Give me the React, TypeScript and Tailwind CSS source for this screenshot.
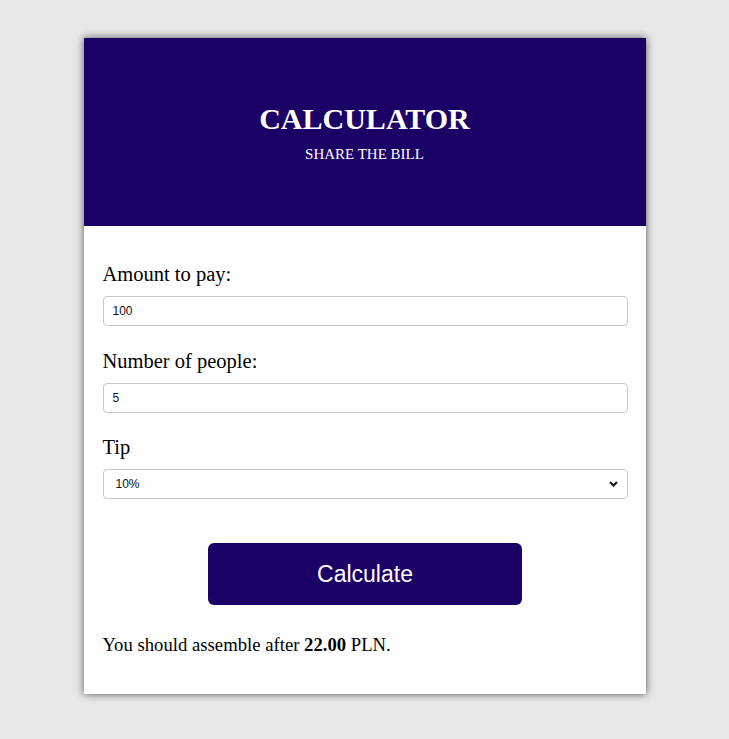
import { useState } from "react"

export default function App() {
  const [amount, setAmount] = useState<string>("100")
  const [people, setPeople] = useState<string>("5")
  const [tip, setTip] = useState<string>("0.1")
  const [result, setResult] = useState<string>("22.00")

  const calculate = () => {
    const a = Number(amount)
    const p = Number(people)
    const t = Number(tip)
    if (!p) return
    setResult(((a + a * t) / p).toFixed(2))
  }

  return (
    <div className="min-h-[739px] bg-[#e8e8e8] pt-[38px] pb-10">
      <div className="mx-auto w-[562px] bg-white shadow-[0_0_8px_rgba(0,0,0,0.65)]">
        {/* header */}
        <div className="h-[188px] bg-[#1b0066] text-white flex flex-col items-center justify-center font-['Liberation_Serif',serif]">
          <h1 className="text-[30px] font-bold leading-[34px] mt-[0px]">CALCULATOR</h1>
          <p className="text-[15px] leading-4 mt-[10px]">SHARE THE BILL</p>
        </div>

        <div className="pl-[19px] pr-[18px] pt-[37px] pb-[39px] font-['Liberation_Serif',serif] text-black">
          <label className="block text-[20.5px] leading-[23px]">Amount to pay:</label>
          <input
            type="number"
            value={amount}
            onChange={(e) => setAmount(e.target.value)}
            className="mt-[10px] block w-full h-[30px] rounded-[4px] border border-[#c8c8c8] px-[9px] text-[12px] text-[#111] font-['Liberation_Sans',sans-serif] outline-none"
          />

          <label className="block text-[20.5px] leading-[23px] mt-[24px]">Number of people:</label>
          <input
            type="number"
            value={people}
            onChange={(e) => setPeople(e.target.value)}
            className="mt-[10px] block w-full h-[30px] rounded-[4px] border border-[#c8c8c8] px-[9px] text-[12px] text-[#111] font-['Liberation_Sans',sans-serif] outline-none"
          />

          <label className="block text-[20.5px] leading-[23px] mt-[23px]">Tip</label>
          <div className="relative mt-[10px]">
            <select
              value={tip}
              onChange={(e) => setTip(e.target.value)}
              className="block w-full h-[30px] appearance-none rounded-[4px] border border-[#c8c8c8] pl-[12px] pr-8 text-[12px] text-[#111] font-['Liberation_Sans',sans-serif] outline-none bg-white"
            >
              <option value="0.05">5%</option>
              <option value="0.1">10%</option>
              <option value="0.15">15%</option>
              <option value="0.2">20%</option>
            </select>
            <svg
              className="pointer-events-none absolute right-[10px] top-[12px]"
              width="9"
              height="6"
              viewBox="0 0 9 6"
              fill="none"
            >
              <path d="M1 1l3.5 3.5L8 1" stroke="#111" strokeWidth="2" />
            </svg>
          </div>

          <div className="flex justify-center mt-[44px]">
            <button
              onClick={calculate}
              className="w-[314px] h-[62px] rounded-[6px] bg-[#1b0066] text-white text-[23px] font-['Liberation_Sans',sans-serif] cursor-pointer"
            >
              Calculate
            </button>
          </div>

          <p className="mt-[29px] text-[18.7px] leading-[21px]">
            You should assemble after <strong className="font-bold">{result}</strong> PLN.
          </p>
        </div>
      </div>
    </div>
  )
}
